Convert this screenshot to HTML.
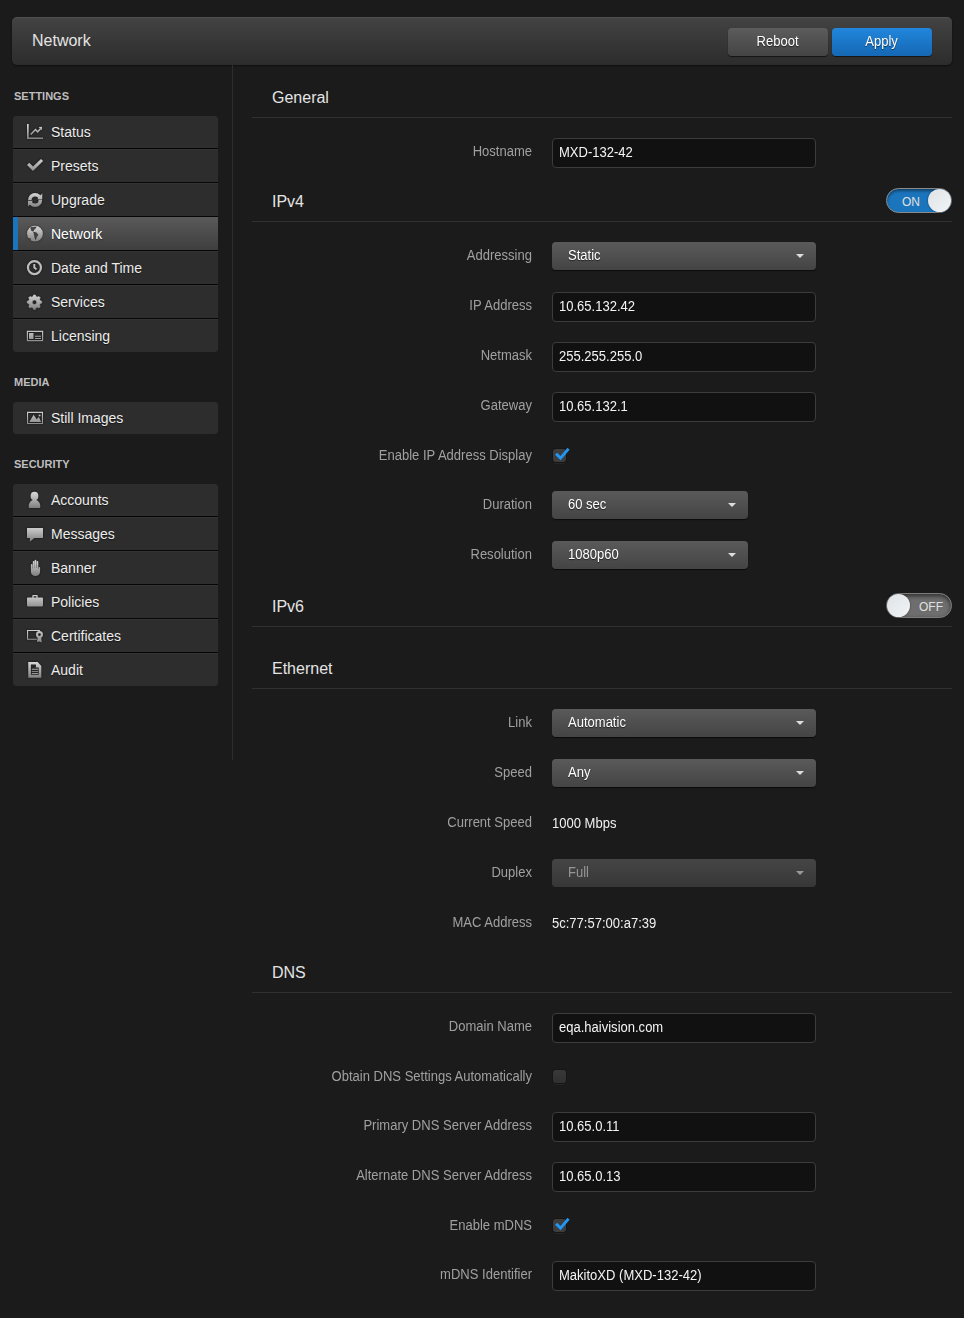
<!DOCTYPE html><html lang="en"><head><meta charset="utf-8"><title>Network</title><style>
*{box-sizing:border-box;margin:0;padding:0}
html,body{width:964px;height:1318px;background:#1b1b1b;overflow:hidden}
body{position:relative;font-family:"Liberation Sans",Arial,sans-serif;font-size:14px;color:#fff}
#hdr{position:absolute;left:12px;top:17px;width:940px;height:48px;border-radius:5px;background:linear-gradient(#434343,#2c2c2c);box-shadow:0 1px 2px rgba(0,0,0,.5),inset 0 1px 0 rgba(255,255,255,.07)}
#hdr h1{position:absolute;left:20px;top:0;line-height:48px;font-size:16px;font-weight:normal;color:#e4e4e4}
.btn{position:absolute;top:11px;width:100px;height:28px;border-radius:4px;font-size:14px;line-height:27px;text-align:center;color:#fff;text-shadow:0 1px 1px rgba(0,0,0,.6);box-shadow:0 1px 1px rgba(0,0,0,.6)}
#reboot{left:716px;background:linear-gradient(#5c5c5c,#444)}
#apply{left:820px;background:linear-gradient(#2186dc,#1568b4)}
#vline{position:absolute;left:232px;top:65px;width:1px;height:695px;background:#2e2e2e}
.cap{position:absolute;left:14px;font-size:11px;font-weight:bold;color:#bebebe;line-height:12px}
.grp{position:absolute;left:13px;width:205px;border-radius:4px;overflow:hidden;background:#2d2d2d}
.it{position:relative;height:34px;background:#2d2d2d;color:#ececec;font-size:14px;line-height:32px;padding-left:38px;text-shadow:0 1px 1px rgba(0,0,0,.5)}
.it:before{content:"";position:absolute;left:0;right:0;top:-1px;height:1px;background:#333}
.it:after{content:"";position:absolute;left:0;right:0;top:32px;height:1px;background:#060606}
.it:last-child{height:32px}
.it:last-child:after{display:none}
.it.on{color:#fff}
.it.on i{position:absolute;left:0;right:0;top:-1px;height:33px;background:linear-gradient(#5a5a5a,#3e3e3e);border-left:5px solid #1b75bc}
.it b{position:relative;font-weight:normal}
.ic{position:absolute;left:12px;top:6px;width:20px;height:20px;filter:drop-shadow(0 0 1px rgba(0,0,0,.55))}
.sec{position:absolute;left:272px;font-size:16px;color:#e4e4e4;line-height:20px}
.hr{position:absolute;left:252px;width:700px;height:1px;background:#303030}
.lb{position:absolute;left:232px;width:300px;text-align:right;font-size:14px;color:#a0a0a0;line-height:20px;white-space:nowrap;transform:scaleX(.93);transform-origin:100% 50%}
.nc{display:inline-block;transform:scaleX(.93)}
.nx{display:inline-block;white-space:nowrap;transform:scaleX(.93);transform-origin:0 50%}
.in{position:absolute;left:552px;width:264px;height:30px;border:1px solid #3c3c3c;border-radius:4px;background:#111;color:#f4f4f4;font-size:14px;line-height:27px;padding-left:6px}
.sel{position:absolute;left:552px;width:264px;height:28px;border-radius:4px;background:linear-gradient(#5a5a5a,#444);color:#fff;font-size:14px;line-height:26px;text-shadow:0 1px 1px rgba(0,0,0,.6);padding-left:16px;box-shadow:0 1px 1px rgba(0,0,0,.6)}
.sel.sm{width:196px}
.sel.dis{color:#969696;background:linear-gradient(#454545,#373737);text-shadow:none;box-shadow:none}
.sel:after{content:"";position:absolute;right:12px;top:12px;border:4px solid transparent;border-top:4px solid #ddd;border-bottom:none}
.sel.dis:after{border-top-color:#999}
.val{position:absolute;left:552px;font-size:14px;color:#f0f0f0;line-height:20px}
.cb{position:absolute;left:553px;width:13px;height:13px;border-radius:3px;background:linear-gradient(#383838,#303030);box-shadow:0 0 0 1px #161616,0 2px 0 #262626}
.cb.on{background:#3d3d3d}
.cb svg{position:absolute;left:1px;top:-3px;width:18px;height:16px}
.cbk{position:absolute;left:553px;width:18px;height:16px;overflow:visible}
.tg{position:absolute;left:886px;width:66px;height:25px;border-radius:13px;font-size:12px;line-height:25px;color:#e0e0e0;border:1px solid #8a8a8a}
.tg.on{background:#1b75bc;box-shadow:inset 0 2px 3px rgba(0,0,0,.45)}
.tg.off{background:#6e6e6e;border-color:#7c7c7c;box-shadow:inset 0 2px 4px rgba(0,0,0,.6)}
.tg i{position:absolute;top:0;width:23px;height:23px;border-radius:12px;background:linear-gradient(135deg,#dfe3e6,#f2f4f6);box-shadow:0 0 2px rgba(0,0,0,.5)}
.tg.on i{right:0}.tg.off i{left:0}
.tg span{position:absolute;top:1px}
.tg.on span{left:15px}.tg.off span{left:32px}
</style></head><body>
<div id="hdr"><h1>Network</h1><div class="btn" id="reboot"><span class="nc">Reboot</span></div><div class="btn" id="apply"><span class="nc">Apply</span></div></div>
<svg width="0" height="0" style="position:absolute"><defs><linearGradient id="ig" gradientUnits="userSpaceOnUse" x1="0" y1="2" x2="0" y2="18"><stop offset="0" stop-color="#d8d8d8"/><stop offset="1" stop-color="#7e7e7e"/></linearGradient></defs></svg>
<div id="vline"></div>
<div class="cap" style="top:90px">SETTINGS</div>
<div class="grp" style="top:116px">
<div class="it"><svg class="ic" viewBox="0 0 20 20" aria-hidden="true"><path fill="url(#ig)" d="M2 2h1.7v13.4H18v1.7H2z"/><path fill="none" stroke="url(#ig)" stroke-width="1.5" d="M5.7 12.5l4.800-4.900 2.200 2.200 2.800-3"/><path fill="url(#ig)" d="M13.600 5l3.500-.300-.300 3.600z"/></svg><b>Status</b></div>
<div class="it"><svg class="ic" viewBox="0 0 20 20" aria-hidden="true"><path fill="url(#ig)" d="M2 9l2.300-2.200 3.700 3.600 8-7.500 2.100 2.200L8 14.900z"/></svg><b>Presets</b></div>
<div class="it"><svg class="ic" viewBox="0 0 20 20" aria-hidden="true"><circle cx="10.1" cy="10" r="5.300" fill="none" stroke="url(#ig)" stroke-width="3.600"/><path fill="url(#ig)" d="M17.250 3v6.300h-5zM2.900 17.100v-6.400h5z"/><path fill="#2d2d2d" d="M12.900 9.200h4.500v.600h-4.500zM2.700 10.100h4.500v.600H2.700zM14.300 3.300l1.700 1.700 1.100-1.900zM5.800 16.800l-1.700-1.700-1.100 1.900z"/></svg><b>Upgrade</b></div>
<div class="it on"><i></i><svg class="ic" viewBox="0 0 20 20" aria-hidden="true"><mask id="gm"><rect width="20" height="20" fill="#000"/><circle cx="9.950" cy="9.700" r="7.900" fill="#fff"/><path fill="#000" d="M5.500 2.900l6.300-.400-1.300 1.900-1.500 1.500-.700 1.600-1.700-.400-.800-1.500zM8.300 7.700l3.100.900 2 2.200-1.600 2.200-1.100 3.200-1-2.100-.700-3.100zM1.500 13.500l4.200 1 .200 2.900-3.900.300z"/></mask><rect x="1" y="1" width="18" height="18" fill="url(#ig)" mask="url(#gm)"/></svg><b>Network</b></div>
<div class="it"><svg class="ic" viewBox="0 0 20 20" aria-hidden="true"><circle cx="9.450" cy="9.550" r="6.500" fill="none" stroke="#bcbcbc" stroke-width="2.200"/><path fill="none" stroke="#c0c0c0" stroke-width="1.900" d="M9.300 5.900v3.600l2.200 1.900"/></svg><b>Date and Time</b></div>
<div class="it"><svg class="ic" viewBox="0 0 20 20" aria-hidden="true"><path fill-rule="evenodd" stroke="url(#ig)" stroke-width=".6" stroke-linejoin="round" fill="url(#ig)" d="M7.85 4.63 L8.61 2.95 L10.33 2.95 L11.09 4.63 L12.26 5.12 L13.99 4.47 L15.20 5.68 L14.55 7.41 L15.04 8.58 L16.72 9.34 L16.72 11.06 L15.04 11.82 L14.55 12.99 L15.20 14.72 L13.99 15.93 L12.26 15.28 L11.09 15.77 L10.33 17.45 L8.61 17.45 L7.85 15.77 L6.68 15.28 L4.95 15.93 L3.74 14.72 L4.39 12.99 L3.90 11.82 L2.22 11.06 L2.22 9.34 L3.90 8.58 L4.39 7.41 L3.74 5.68 L4.95 4.47 L6.68 5.12Z M7.17 10.20 a2.3 2.3 0 1 0 4.6 0 a2.3 2.3 0 1 0 -4.6 0Z"/></svg><b>Services</b></div>
<div class="it"><svg class="ic" viewBox="0 0 20 20" aria-hidden="true"><path fill-rule="evenodd" fill="url(#ig)" d="M1.800 4.800h16.400v10.400H1.800zM3 6v8h14V6z"/><path fill="url(#ig)" d="M4 7h4.500v6H4zM10 9.700h6v1.100h-6zM10 11.900h6v1.100h-6z"/></svg><b>Licensing</b></div>
</div>
<div class="cap" style="top:376px">MEDIA</div>
<div class="grp" style="top:402px">
<div class="it"><svg class="ic" viewBox="0 0 20 20" aria-hidden="true"><path fill-rule="evenodd" fill="url(#ig)" d="M2 3.800h16V16H2zM3.100 4.900v10h13.800v-10z"/><path fill="url(#ig)" d="M4.300 14.100l4.300-7.300 3.100 4.500 2.200-2.200 2.200 5z"/><circle cx="14.600" cy="7.400" r="1" fill="url(#ig)"/></svg><b>Still Images</b></div>
</div>
<div class="cap" style="top:458px">SECURITY</div>
<div class="grp" style="top:484px">
<div class="it"><svg class="ic" viewBox="0 0 20 20" aria-hidden="true"><ellipse cx="9.500" cy="6" rx="3.900" ry="4.300" fill="url(#ig)"/><path fill="url(#ig)" d="M9.500 9.400c-2.200 0-5.800 2.200-5.800 6.900v.9c0 .5.400.8.800.8h10c.400 0 .800-.300.800-.800v-.900c0-4.700-3.600-6.900-5.800-6.900z"/></svg><b>Accounts</b></div>
<div class="it"><svg class="ic" viewBox="0 0 20 20" aria-hidden="true"><path fill="url(#ig)" d="M2 3.900h16v10.100H9.300l-4.400 3.700V14H2z"/></svg><b>Messages</b></div>
<div class="it"><svg class="ic" viewBox="0 0 20 20" aria-hidden="true"><path fill="url(#ig)" d="M5.900 6.800a.800.800 0 0 1 1.600 0v3.700h.300V3.800a.800.800 0 0 1 1.600 0V10h.200V2.700a.850.850 0 0 1 1.700 0V10h.300V3.800a.850.850 0 0 1 1.700 0V11h.300V9.700a.750.750 0 0 1 1.500 0v3.800c0 2.800-2 4.600-4.600 4.600s-4.600-1.800-4.600-4.600z"/></svg><b>Banner</b></div>
<div class="it"><svg class="ic" viewBox="0 0 20 20" aria-hidden="true"><path fill="url(#ig)" d="M7.300 5.600V3.700c0-.500.400-.800.800-.800h3.800c.400 0 .800.300.800.800v1.900h4.500c.400 0 .800.400.800.800v7.200c0 .400-.400.800-.800.800H2.800c-.400 0-.800-.400-.800-.800V6.400c0-.400.400-.800.800-.800zm1.300 0h2.800V4.200H8.600z"/></svg><b>Policies</b></div>
<div class="it"><svg class="ic" viewBox="0 0 20 20" aria-hidden="true"><path fill="url(#ig)" d="M2 4h12.900v1.600h-1.100v-.500H3.100v7.600h8.700v1.100H2z"/><path fill-rule="evenodd" fill="url(#ig)" d="M14.450 5.100a3.500 3.500 0 1 1 0 7 3.500 3.500 0 0 1 0-7zm0 2.100a1.400 1.400 0 1 0 0 2.800 1.400 1.400 0 0 0 0-2.800z"/><path fill="url(#ig)" d="M12.800 11.300L11.900 16l2.300-.600 2.600 1.200-.700-5.300z"/></svg><b>Certificates</b></div>
<div class="it"><svg class="ic" viewBox="0 0 20 20" aria-hidden="true"><path fill-rule="evenodd" fill="url(#ig)" d="M3.250 1.900h9.450l3.600 4.100v11.650H3.250zM5.900 4.400v10.450h7.800V7.400h-2.800v-3z"/><path fill="url(#ig)" d="M6.800 8.800h6.250v.9H6.800zM6.800 10.950h6.250v.9H6.800zM6.800 13h6.250v.9H6.800z"/></svg><b>Audit</b></div>
</div>
<div class="sec" style="top:88px">General</div>
<div class="hr" style="top:117px"></div>
<div class="lb" style="top:141px">Hostname</div>
<div class="in" style="top:138px"><span class="nx">MXD-132-42</span></div>
<div class="sec" style="top:192px">IPv4</div>
<div class="hr" style="top:221px"></div>
<div class="tg on" style="top:188px"><span>ON</span><i></i></div>
<div class="lb" style="top:245px">Addressing</div>
<div class="sel " style="top:242px"><span class="nx">Static</span></div>
<div class="lb" style="top:295px">IP Address</div>
<div class="in" style="top:292px"><span class="nx">10.65.132.42</span></div>
<div class="lb" style="top:345px">Netmask</div>
<div class="in" style="top:342px"><span class="nx">255.255.255.0</span></div>
<div class="lb" style="top:395px">Gateway</div>
<div class="in" style="top:392px"><span class="nx">10.65.132.1</span></div>
<div class="lb" style="top:445px">Enable IP Address Display</div>
<div class="cb on" style="top:449px"><svg viewBox="0 0 18 16"><path fill="#2196f3" d="M1 8.800l2.200-2.100 3.300 3.300 7-8.300 2.100 2.100L6.600 14.200z"/></svg></div>
<div class="lb" style="top:494px">Duration</div>
<div class="sel sm" style="top:491px"><span class="nx">60 sec</span></div>
<div class="lb" style="top:544px">Resolution</div>
<div class="sel sm" style="top:541px"><span class="nx">1080p60</span></div>
<div class="sec" style="top:597px">IPv6</div>
<div class="hr" style="top:626px"></div>
<div class="tg off" style="top:593px"><span>OFF</span><i></i></div>
<div class="sec" style="top:659px">Ethernet</div>
<div class="hr" style="top:688px"></div>
<div class="lb" style="top:712px">Link</div>
<div class="sel " style="top:709px"><span class="nx">Automatic</span></div>
<div class="lb" style="top:762px">Speed</div>
<div class="sel " style="top:759px"><span class="nx">Any</span></div>
<div class="lb" style="top:812px">Current Speed</div>
<div class="val" style="top:813px"><span class="nx">1000 Mbps</span></div>
<div class="lb" style="top:862px">Duplex</div>
<div class="sel dis" style="top:859px"><span class="nx">Full</span></div>
<div class="lb" style="top:912px">MAC Address</div>
<div class="val" style="top:913px"><span class="nx">5c:77:57:00:a7:39</span></div>
<div class="sec" style="top:963px">DNS</div>
<div class="hr" style="top:992px"></div>
<div class="lb" style="top:1016px">Domain Name</div>
<div class="in" style="top:1013px"><span class="nx">eqa.haivision.com</span></div>
<div class="lb" style="top:1066px">Obtain DNS Settings Automatically</div>
<div class="cb " style="top:1070px"></div>
<div class="lb" style="top:1115px">Primary DNS Server Address</div>
<div class="in" style="top:1112px"><span class="nx">10.65.0.11</span></div>
<div class="lb" style="top:1165px">Alternate DNS Server Address</div>
<div class="in" style="top:1162px"><span class="nx">10.65.0.13</span></div>
<div class="lb" style="top:1215px">Enable mDNS</div>
<div class="cb on" style="top:1219px"><svg viewBox="0 0 18 16"><path fill="#2196f3" d="M1 8.800l2.200-2.100 3.300 3.300 7-8.300 2.100 2.100L6.600 14.200z"/></svg></div>
<div class="lb" style="top:1264px">mDNS Identifier</div>
<div class="in" style="top:1261px"><span class="nx">MakitoXD (MXD-132-42)</span></div>
</body></html>
